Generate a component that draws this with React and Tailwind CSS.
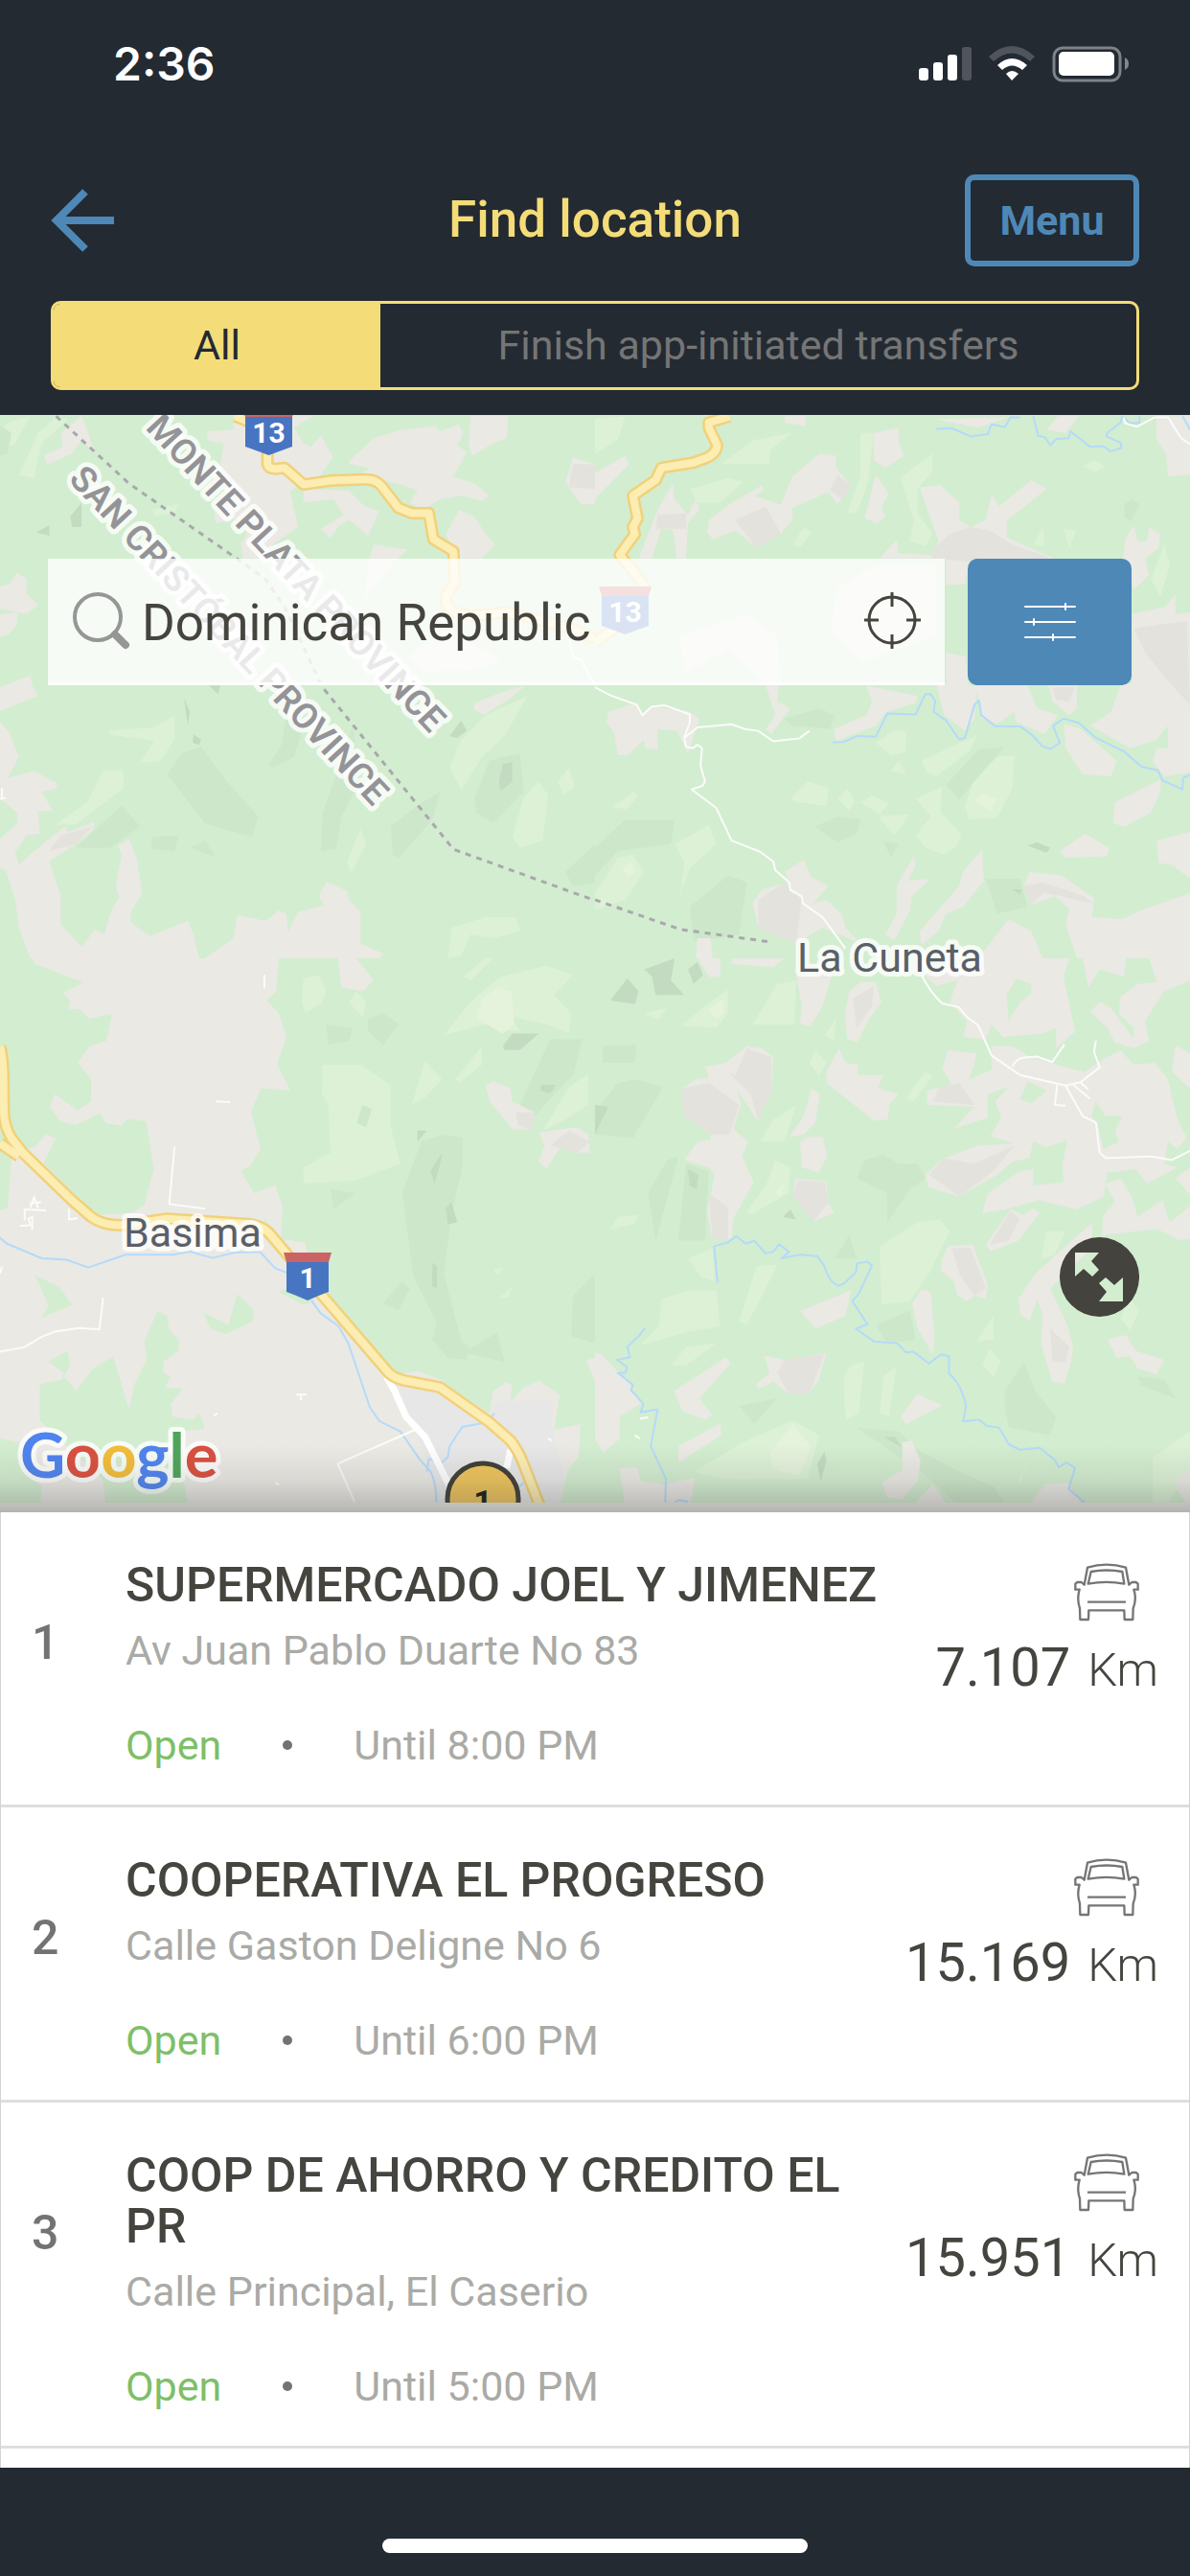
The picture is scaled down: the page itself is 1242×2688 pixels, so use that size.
import { useState } from "react"

const locations = [
  { id: 1, name: "SUPERMERCADO JOEL Y JIMENEZ", address: "Av Juan Pablo Duarte No 83", until: "Until 8:00 PM", distance: "7.107" },
  { id: 2, name: "COOPERATIVA EL PROGRESO", address: "Calle Gaston Deligne No 6", until: "Until 6:00 PM", distance: "15.169" },
  { id: 3, name: "COOP DE AHORRO Y CREDITO EL PR", address: "Calle Principal, El Caserio", until: "Until 5:00 PM", distance: "15.951" },
]

// Map terrain, one entry per tile. Every tile has its own 1568 x 1568 grid.
const tiles = [
  {
    id: "nw", x: 0, y: -3, height: 570,
    land: [
      "545,80 548,55 615,50 615,12 825,12 775,45 800,90 820,100 845,65 878,130 845,180 765,225 785,330 720,380 700,420 640,420 635,380 650,350 640,300 570,320 565,290 600,230 580,150 590,90",
      "920,140 985,75 1060,50 1145,40 1160,55 1210,35 1220,65 1205,95 1230,115 1195,185 1250,205 1290,240 1270,255 1215,240 1160,250 1115,280 1080,260 1100,225 1060,210 990,190 940,185 975,160 920,150",
      "800,220 920,225 960,270 1000,285 985,320 970,355 920,310 895,325 870,362 845,335 905,295 880,250 800,260",
      "1240,12 1340,12 1335,75 1300,90 1245,125 1235,95",
      "1510,130 1568,150 1568,265 1530,265 1490,200",
      "1175,350 1210,280 1250,300 1280,350 1305,380 1270,420 1200,420",
      "985,380 1075,395 1030,440 960,540 970,430",
      "0,500 25,495 45,460 70,480 70,520 100,555 70,580 0,565",
      "0,580 45,575 45,610 20,640 0,645",
      "0,790 80,755 85,785 100,815 0,858",
      "0,890 25,920 50,990 20,1050 90,1030 150,1065 150,1080 110,1090 140,1145 100,1145 105,1210 70,1215 40,1265 50,1300 90,1260 170,1190 180,1205 250,1175 245,1200 200,1240 130,1290 160,1390 160,1470 215,1535 250,1485 275,1500 290,1440 315,1390 305,1365 320,1270 310,1245 340,1225 360,1280 375,1380 345,1435 345,1465 395,1505 495,1460 510,1500 525,1568 80,1568 50,1480 40,1400 15,1315 0,1310 0,1225 45,1180 45,1150 0,1110",
      "540,1568 615,1510 625,1445 700,1460 735,1430 755,1440 760,1490 785,1435 855,1415 840,1390 860,1348 915,1375 920,1400 950,1435 950,1525 1010,1555 1000,1568",
      "1250,835 1320,805 1385,785 1340,825 1275,870 1250,855",
      "115,125 165,100 160,60 215,12 230,50 250,120 215,80 190,120 125,150",
      "1080,700 1180,620 1320,710 1250,740 1120,745",
    ],
    shade: ["1510,150 1568,150 1568,220 1500,215", "130,1260 160,1215 245,1190 200,1240"],
    light: [
      "50,180 100,60 150,12 180,20 110,90 90,190",
      "285,915 405,905 460,870 460,940 420,1005 370,1005 405,945 290,925",
      "270,1030 325,1030 325,1080 200,1185 145,1185 230,1120",
      "1185,1020 1215,940 1280,870 1390,815 1330,930 1270,990 1215,1085",
      "1380,1105 1420,1060 1445,1100 1430,1230 1370,1250 1350,1220",
      "1190,1480 1280,1450 1360,1450 1370,1490 1300,1510 1240,1500 1215,1560 1180,1568",
      "915,1290 950,1195 965,1240 925,1325",
      "1470,1060 1500,1020 1515,1075 1485,1100",
      "400,280 470,265 460,290 410,300",
      "20,30 80,12 40,90 0,110 0,60",
    ],
    pale: [],
    dark: [
      "440,1040 480,980 530,960 590,1050 680,1160 665,1220 600,1200 540,1180",
      "850,1150 900,1000 930,900 950,1060 900,1160 885,1255 845,1260",
      "1030,1190 1100,1130 1160,1090 1140,1170 1050,1280 1035,1270",
      "1250,1110 1290,1000 1370,980 1380,1090 1300,1180 1255,1150",
      "710,1010 740,960 755,870 800,900 775,990 720,1020",
      "0,40 30,60 20,120 0,125",
      "200,1250 320,1130 370,1190 290,1250",
      "1490,1320 1568,1240 1568,1350 1510,1360",
      "400,1220 470,1215 460,1260 400,1255",
      "500,1250 540,1230 570,1278",
    ],
    deep: [
      "185,300 215,260 215,330 190,330", "95,345 130,325 130,355", "485,820 500,860 495,900", "510,925 530,940 525,955 508,950",
      "1315,1060 1325,1010 1350,1005 1350,1060 1320,1088", "550,785 580,785 575,810", "1185,930 1215,885 1230,915 1205,935",
    ],
    rivers: "",
    roads: "M1500 650L1510 705 1530 710 1568 785M0 1110L15 1108M5 1080V1108",
    avenues: "",
    highways: "M620 12L650 25 705 60 705 150Q708 163 725 163L750 160 800 208 870 197 960 193Q990 192 1005 212L1050 275 1085 290 1130 290 1142 365 1195 400 1198 490 1175 530Q1172 560 1200 575L1240 585 1330 575 1400 590 1500 620 1568 650",
    border: "M148 12L340 205 630 425 700 480 750 560 850 790 1195 1255 1568 1402",
  },
  {
    id: "ne", x: 621, y: -3, height: 570,
    land: [
      "0,175 80,125 90,150 0,250",
      "115,420 165,280 205,205 210,250 245,295 265,250 275,280 245,320 240,420 215,420 205,340 175,335 150,420",
      "300,310 360,260 440,210 445,225 420,240 490,265 520,185 590,120 635,125 635,160 675,210 640,265 615,230 520,275 520,310 490,350 425,390 370,340 310,365 295,345",
      "735,60 800,45 800,90 815,125 765,160 735,140",
      "740,180 775,235 755,270 765,300 745,320 710,305",
      "855,215 910,210 960,260 960,310 990,330 1030,310 1045,235 1065,270 1150,195 1190,220 1140,265 1085,310 1085,360 1210,420 1260,430 985,440 975,495 925,495 925,420 750,420 795,365 800,405 890,410 905,370",
      "895,20 1090,15 1010,45",
      "1190,50 1220,12 1275,12 1240,60",
      "1480,12 1568,12 1568,180 1510,185 1505,120 1480,80",
      "500,12 555,12 555,40 500,30",
      "1390,420 1400,360 1420,325 1430,370 1455,370 1460,330 1490,350 1485,390 1450,420 1460,470 1420,510",
      "1415,580 1500,560 1530,525 1530,580 1568,575 1568,1035 1500,1045 1470,1005 1480,965 1510,965 1510,900 1480,940 1410,965 1305,900 1360,860 1385,780 1415,780",
      "925,690 975,700 985,785 1140,785 1165,850 1220,870 1185,925 1110,890 1105,860 1060,895 1020,880 1005,800 1000,880 975,915 920,870 900,785 925,780",
      "1195,785 1270,785 1270,850 1250,870 1205,830",
      "715,785 850,815 845,835 770,860 740,900 635,945 630,910 715,870 730,830",
      "450,785 485,785 480,830 515,850 465,925 450,910 475,870",
      "35,860 110,835 125,870 150,845 250,860 275,880 245,980 215,915 165,910 165,970 130,965 130,940 85,985 60,985 50,920 30,890",
      "1235,895 1280,910 1375,1000 1360,1045 1285,1040 1240,965",
      "1370,1120 1490,1055 1490,1090 1465,1150 1395,1190 1365,1180",
      "1225,1260 1290,1210 1355,1250 1350,1275 1240,1280",
      "1480,1230 1568,1205 1568,1340 1520,1300 1485,1295",
      "840,1275 845,1300 825,1345 885,1340 835,1390 830,1430 790,1515 765,1500 795,1440 795,1360",
      "1020,1255 1025,1345 970,1420 925,1440 905,1490 860,1530 855,1490 960,1360 970,1320",
      "1130,1360 1145,1320 1230,1330 1315,1395 1310,1450 1390,1455 1440,1430 1568,1380 1568,1568 1270,1568 1240,1470 1250,1425 1210,1390 1150,1415",
      "500,1320 550,1285 570,1335 615,1360 575,1410 610,1400 650,1440 660,1480 700,1525 600,1480 530,1525 430,1480 415,1410 440,1370 510,1350",
      "1010,1568 1090,1455 1150,1490 1180,1568",
      "265,1568 270,1510 305,1510 310,1568",
      "220,640 400,580 480,640 490,785 455,785 350,680 240,750",
      "640,500 740,440 900,440 900,640 700,720 620,620",
    ],
    shade: [
      "885,400 935,350 990,330 1040,340 1100,380 1200,418 1100,440 890,420",
      "370,310 450,270 490,350 425,390",
      "430,1400 500,1350 545,1400 530,1525 430,1480",
      "1560,600 1568,840 1500,760 1450,690 1420,620",
      "1205,790 1265,790 1250,830 1215,825",
      "165,295 240,290 240,335 160,335",
      "640,180 675,210 650,250 620,225",
      "1130,1360 1180,1350 1290,1390 1310,1410 1230,1390 1180,1380 1150,1415",
    ],
    light: [
      "700,60 735,60 720,200 690,290 665,290 700,180",
      "805,190 850,150 890,120 890,170 850,220 850,290 890,350 870,385 830,370 840,310",
      "330,150 420,80 520,60 460,110 460,150",
      "975,1130 1000,1050 1060,990 1105,985 1100,1080 1060,1165 985,1170",
      "740,950 785,915 820,915 820,975 780,985",
      "860,1000 960,950 1005,930 990,970 900,1045 875,1035",
      "515,1110 560,1060 615,1080 610,1130 530,1120",
      "640,1110 665,1080 685,1115 670,1145",
      "700,1120 730,1100 775,1125 750,1155",
      "780,1030 800,1000 820,1040",
      "845,1110 915,1075 910,1150 965,1210 955,1245 920,1270 870,1250 845,1215 885,1160",
      "745,1160 830,1155 790,1215",
      "210,1240 300,1185 320,1240 250,1310 225,1390 235,1290",
      "0,1380 60,1280 100,1270 130,1320 80,1400 0,1430",
      "250,220 350,190 390,200 330,260 270,260",
      "1465,480 1500,380 1515,440 1490,530",
      "0,20 80,12 60,80 0,120",
      "1235,335 1268,340 1250,390",
      "1180,330 1185,385 1155,380",
      "1285,155 1315,138 1345,155 1320,172",
      "45,1135 100,1090 115,1100 85,1140",
      "520,380 550,330 572,345 540,388",
    ],
    pale: ["1000,1120 1020,1095 1060,1110 1045,1145", "70,1310 95,1290 110,1320 90,1335"],
    dark: [
      "925,1070 1010,970 1080,960 1000,1060 960,1115",
      "580,1190 640,1160 700,1170 690,1210 640,1235",
      "500,880 590,850 630,870 620,910 520,900",
      "0,1250 80,1170 210,1170 200,1240 60,1260 0,1330",
      "1030,1340 1120,1340 1140,1420 1060,1440",
      "250,1420 350,1330 400,1350 380,1500 260,1520",
      "760,1230 800,1240 780,1280",
      "1460,680 1525,700 1500,745",
      "1395,265 1415,250 1435,265 1415,310 1395,305",
    ],
    deep: ["1140,1245 1165,1235 1200,1250 1190,1265", "1100,1370 1125,1370 1120,1385"],
    rivers: "M900 48L940 46 990 70 1035 63 1045 35 1080 43 1095 15 1120 15M1155 12L1168 68 1185 72 1200 95 1215 78 1248 75 1253 55 1305 100 1340 98 1358 113 1387 103 1385 88 1348 70 1350 60 1385 30 1390 12 1410 32 1435 30 1435 12M1548 12L1568 50M625 948L655 947 690 930 740 932 770 865 845 868 870 810 885 810 897 830 892 860 925 885 960 940 975 935 1000 840 1012 828 1018 870 1055 902 1120 902 1150 925 1180 960 1200 967 1225 950 1207 900 1235 880 1275 892 1320 935 1395 975 1440 1018 1483 1028 1495 1057 1548 1083 1550 1050 1568 1042",
    roads: "M0 790L45 815 110 840 125 870 150 845 185 842 250 868 250 890 235 935 240 960 258 965 270 955 282 965 278 1015 290 1060 283 1073 255 1083 320 1137 360 1230 435 1262 470 1290 475 1315 512 1350 515 1372 545 1390 548 1410 600 1450 660 1540M235 935L270 905 360 896 395 910 430 915 470 945 538 937 565 915M1393 15L1397 32 1428 42 1475 15 1510 15 1545 75 1568 92",
    avenues: "",
    highways: "M355 12L300 30 300 45 322 95Q320 120 290 133L260 145 175 160 160 195 100 240 112 305 100 330 105 350 65 410 100 455 130 500 80 600 0 660",
    border: "M0 1400L225 1485 455 1520",
  },
  {
    id: "sw", x: 0, y: 567, height: 600,
    land: [
      "0,0 735,0 728,90 703,115 735,150 755,215 730,290 765,360 687,355 662,420 687,520 660,565 635,580 670,640 725,618 745,680 740,765 805,775 810,810 860,900 1020,1140 1100,1125 1165,1150 1200,1180 1290,1240 1300,1180 1335,1155 1350,1165 1345,1210 1380,1170 1420,1152 1475,1190 1460,1285 1530,1270 1525,1360 1500,1390 1490,1420 1460,1568 0,1568",
      "890,0 940,0 985,60 955,90 900,80",
      "1280,345 1300,335 1345,355 1350,390 1410,420 1400,470 1350,465 1290,390",
      "1420,475 1520,460 1550,480 1555,530 1520,530 1480,510 1440,575 1420,555 1435,510",
      "1545,1095 1568,1090 1568,1155",
    ],
    wood: [
      "0,0 85,0 90,15 180,50 220,65 165,95 185,115 180,138 210,140 235,165 295,150 280,225 235,240 205,285 240,330 240,390 205,415 145,370 130,405 160,445 200,455 262,423 280,450 320,457 335,438 385,445 405,575 380,675 340,695 250,700 115,558 148,490 120,480 90,515 65,520 30,545 20,680 0,688",
      "92,865 155,895 190,945 110,980 128,945",
      "535,965 602,1000 625,915 670,960 665,990 592,1025 555,1010",
      "105,1162 165,1148 168,1130 128,1100 178,1070 185,1110 168,1140 200,1180 245,1120 298,1085 340,1230 355,1160 387,1095 380,1045 415,962 440,975 445,1010 472,1045 470,1070 430,1100 430,1130 450,1140 435,1170 480,1175 450,1215 455,1250 510,1258 525,1240 540,1283 470,1290 450,1340 480,1400 510,1568 290,1568 270,1420 105,1260",
      "0,1310 50,1320 60,1400 110,1440 100,1568 0,1568",
      "695,705 720,745 700,740",
      "735,910 755,900 830,935 800,945",
    ],
    urban: [
      "1050,1165 1160,1190 1300,1280 1350,1330 1380,1400 1415,1568 1180,1568 1100,1300",
      "1300,1210 1455,1205 1455,1290 1490,1420 1440,1568 1350,1310 1290,1250",
    ],
    shade: ["1360,420 1410,420 1400,470 1365,455", "1450,510 1500,470 1555,500 1520,530"],
    light: [
      "795,120 800,55 840,45 860,85 850,120 805,150",
      "920,120 940,90 965,120 955,160",
      "850,290 950,290 1030,345 1030,460 1055,560 940,605 800,615 800,570 870,530 865,400 848,370",
      "1170,210 1230,130 1260,100 1320,50 1440,20 1510,45 1460,100 1505,150 1500,205 1440,180 1350,160 1370,200 1330,195 1280,180",
      "1085,400 1120,280 1165,330 1120,380",
      "1430,470 1500,350 1550,315 1550,400 1490,440",
      "1220,50 1280,0 1300,0 1240,60",
      "1200,330 1270,240 1270,290 1210,340",
      "120,140 145,120 135,145", "145,268 165,265 150,292", "1300,850 1330,840 1310,865", "1315,925 1350,895 1340,925",
    ],
    pale: ["1255,165 1270,110 1310,80 1350,90 1355,180 1325,205"],
    dark: [
      "1060,640 1110,500 1170,480 1220,490 1220,560 1190,700 1170,860 1215,1040 1235,1060 1230,1095 1180,1090 1140,1040 1150,990 1090,870",
      "860,180 930,190 920,225 865,235",
      "970,165 1010,148 1050,180 1010,235 970,200",
      "1370,400 1450,220 1535,220 1510,320 1460,370 1410,430 1340,400",
      "1220,1075 1280,1040 1310,1020 1330,1100",
      "1510,920 1568,860 1568,1050 1505,1030",
      "1010,940 1060,880 1080,900 1050,960",
      "870,630 935,640 880,685",
      "940,450 955,400 980,410 965,460",
      "170,150 185,145 200,200 180,200", "185,320 205,290 210,340 190,350",
    ],
    deep: [
      "1325,240 1350,205 1420,205 1370,250 1330,250", "1425,345 1465,345 1450,368 1425,362", "1100,470 1125,470 1100,500",
      "1175,680 1190,665 1205,720 1180,725", "1140,830 1152,840 1152,900 1138,895", "1135,580 1165,530 1160,560 1145,615",
    ],
    rivers: "M0 762L18 778 110 818 175 822 233 843 330 808 455 808 500 800 560 817 620 802 685 800 725 845 755 857M820 932L845 968 892 1003 918 1050 975 1225 1000 1262 1055 1290 1105 1365 1135 1400Q1150 1430 1150 1484M1125 1400L1130 1365 1165 1375 1180 1360 1185 1330 1218 1278 1285 1265 1303 1240M1365 1445L1380 1430",
    roads: "M460 513L446 670 540 683M0 1073L65 1060 110 1032 145 1018 210 1008 262 1012 272 925M697 45V82M568 390L607 392M1095 1285L890 1378 935 1484M65 715V685L122 687M52 730L80 728 75 710 85 705V740M80 680L90 650 100 680M78 668L108 665M780 1190H808M793 1190V1205M182 683V712L205 708M563 1248L573 1240M725 1430L735 1436M0 860L5 840M1445 1308L1453 1316",
    avenues: "M1018 1140L1040 1180 1070 1250 1120 1305 1190 1450M1345 1340L1335 1390",
    highways: "M0 505L50 540M0 240Q8 270 9 320L10 420Q12 460 30 490L60 530 190 660 240 705Q270 728 320 728L440 710 650 724Q690 728 710 750L800 860 1020 1125Q1030 1140 1060 1150L1160 1170 1290 1265 1345 1315Q1365 1340 1380 1380L1425 1500",
    border: "",
  },
  {
    id: "se", x: 621, y: 567, height: 600,
    land: [
      "530,45 625,45 600,130 568,185 540,178 545,130",
      "700,65 740,65 755,120 720,170 692,228 665,220 658,160 670,90",
      "290,295 345,285 400,240 440,245 470,270 465,360 430,445 375,360 385,400 365,465 403,500 388,540 418,610 365,710 360,765 310,768 295,690 315,590 300,570 235,550 270,500 305,495 305,450 235,430 228,355 265,330 300,325",
      "643,245 660,285 695,290 690,318 760,318 745,355 800,370 775,400 772,440 735,443 610,340 610,310",
      "570,355 593,370 580,450 550,480 512,488 550,430",
      "540,500 560,488 600,487 612,540 590,585 545,570",
      "530,600 610,608 615,665 630,695 575,718 550,680 520,645",
      "1250,0 1235,50 1265,200 1215,245 1215,190 1180,205 1075,215 1045,180 1030,220 970,215 980,170 935,120 955,60 900,75 865,45 1000,0",
      "1285,0 1400,0 1395,50 1330,30 1300,80",
      "1460,0 1568,0 1568,60 1500,90 1450,170 1460,225 1420,245 1370,230 1350,190 1305,145 1330,118 1360,135 1420,220 1420,190 1380,150 1385,105 1430,70 1480,65",
      "1045,240 1100,240 1150,270 1250,300 1290,310 1330,280 1385,250 1420,290 1475,285 1510,330 1535,440 1560,490 1535,520 1510,500 1500,560 1535,570 1455,615 1425,575 1350,585 1340,650 1270,685 1170,660 1080,685 1020,695 1035,640 1120,580 1155,575 1155,620 1235,610 1232,560 1245,495 1190,515 1155,500 1145,545 1100,555 1060,590 960,650 880,625 870,590 920,545 1010,510 1105,505 1042,485 1070,435 1055,390 1090,350 1035,370 1035,435 945,465 1000,405 875,400 875,360 940,345 915,300 930,250 1005,260 1000,290 985,330 1045,305",
      "1340,700 1370,665 1345,615 1385,600 1415,650 1430,705 1495,660 1515,720 1568,675 1568,765 1540,768 1480,738 1335,755",
      "1530,235 1568,260 1568,355 1520,310",
      "1530,600 1568,570 1568,645",
      "1030,780 1095,685 1130,700 1155,680 1172,695 1115,770 1042,800",
      "915,820 930,785 995,780 1035,890 1030,930 1000,920 980,935 955,920 945,880 910,850",
      "835,940 860,903 885,910 895,1030 890,1080 850,1010",
      "1115,930 1160,860 1310,720 1310,790 1200,900 1245,1000 1260,1060 1255,1100 1237,1160 1205,1155 1175,1050 1180,970 1165,930 1145,990 1120,970",
      "1350,1040 1400,1027 1425,1070 1500,1095 1480,1133 1430,1120 1410,1085 1375,1090",
      "540,962 675,905 660,975 582,1010",
      "445,1083 500,1095 610,1077 590,1150 565,1185 510,1187 470,1155 430,1175 425,1160 460,1130",
      "208,1180 345,1088 357,1105 275,1200 310,1245 290,1258 230,1235",
      "220,1330 330,1268 333,1300 220,1375",
      "0,1075 15,1078 90,1160 120,1215 65,1250 65,1310 22,1350 0,1310",
      "805,1250 850,1187 915,1220 820,1270",
      "810,1320 835,1315 858,1370 850,1425 810,1475 770,1470 755,1430 810,1395",
      "65,1390 110,1388 120,1425 180,1435 263,1417 250,1500 80,1500",
      "1150,1484 1185,1435 1245,1430 1290,1500",
      "845,1484 890,1435 935,1500",
      "1530,1420 1568,1390 1568,1500 1535,1450",
      "360,0 500,0 470,25 360,15",
      "270,0 330,0 330,50 300,50",
    ],
    wood: [
      "1085,100 1110,55 1150,70 1150,95 1120,120 1090,170",
      "1120,385 1140,335 1190,360 1150,395",
      "1320,390 1345,430 1390,430 1370,470 1380,500 1340,520 1325,450 1308,430",
    ],
    shade: [
      "370,320 400,245 465,270 465,360 430,445 410,370 350,310",
      "910,350 960,340 1000,400 890,390",
      "880,590 920,545 1000,560 1105,510 1050,580 960,650",
      "680,110 735,75 730,130 690,190",
      "228,355 300,340 380,400 355,480 305,480 235,430",
      "535,605 605,610 615,665 575,718 520,645",
      "500,1095 605,1080 565,1185 510,1187 480,1130",
      "300,640 350,680 350,765 310,768",
      "1200,1010 1250,1060 1240,1100 1205,1100",
      "940,790 990,790 1030,900 1000,920 960,860",
      "1040,780 1095,690 1120,710 1090,770",
    ],
    light: [
      "415,180 480,70 530,60 525,180",
      "225,185 290,130 350,85 350,150 320,190",
      "750,785 850,720 910,712 935,745 880,860 830,935 755,945",
      "175,930 245,905 320,905 330,1005 240,1020 120,1055 170,1000",
      "380,990 425,840 480,835 450,900 400,1000",
      "655,1140 675,1110 710,1100 695,1240 660,1258",
      "750,1240 760,1140 795,1110 775,1250",
      "260,1400 390,1320 520,1260 590,1300 560,1420 340,1420",
      "400,690 450,620 475,550 515,570 510,640 410,700",
      "435,500 470,440 530,400 500,500",
      "245,820 310,790 315,880 280,870",
      "1020,1110 1040,1065 1070,1100 1050,1140",
      "1005,1045 1050,975 1050,1040",
      "1470,1360 1568,1290 1568,1400 1500,1500 1470,1500",
      "200,1110 240,1060 320,1050 240,1110",
      "565,285 580,248 610,285 590,320", "605,210 635,165 630,225", "130,150 190,135 165,168", "820,380 870,310 890,320 840,390",
      "1175,820 1190,745 1240,745 1210,810", "1385,980 1410,930 1435,960 1410,1015", "40,740 60,705 115,700 100,725", "1115,1430 1140,1370 1120,1430",
    ],
    pale: ["460,1350 520,1270 570,1330 540,1410 470,1395", "300,140 340,110 340,150 320,165", "470,640 500,615 490,650"],
    dark: [
      "690,600 710,550 760,535 800,560 850,560 870,600 830,630 770,720 770,640",
      "220,770 240,560 300,580 290,770",
      "1080,1180 1130,1100 1160,1180 1215,1250 1200,1300 1090,1280 1080,1220",
      "0,420 60,340 110,330 180,350 100,490 0,480",
      "740,1000 830,960 845,1040 770,1050",
      "690,1280 800,1290 850,1340 960,1400 1050,1440 1080,1484 950,1484 860,1400",
      "1430,1140 1500,1150 1530,1200 1440,1165",
      "380,1220 480,1200 420,1270",
      "630,820 670,755 690,820",
      "20,240 110,235 105,285 20,285",
      "140,640 190,550 220,540 160,770",
    ],
    deep: [
      "40,115 85,55 115,90 105,125", "130,30 210,0 200,60 235,100 160,100 150,50", "0,400 35,405 0,480", "245,575 272,590 268,630 250,620",
      "495,705 515,685 530,712", "760,1305 790,1305 810,1335", "585,1380 605,1345 610,1370 595,1425", "245,30 270,10 285,45 260,70",
    ],
    rivers: "M323 885L314 785 350 775 372 757 397 778 420 770 450 805 470 800 485 780 512 800 492 818 540 808 585 812 605 840Q615 880 640 893L655 888 688 855 690 832 718 827 730 838 695 915 678 935 718 998 688 1010 735 1045 797 1050 820 1075 840 1073 880 1105 912 1080 933 1085 933 1133Q965 1160 978 1220L970 1263 1012 1258 1032 1275 1065 1280 1090 1325 1120 1340 1172 1335 1212 1368 1222 1388 1243 1375 1265 1390 1248 1447 1290 1484M132 1007L118 1027 85 1060 92 1088 58 1095 85 1115 80 1130 60 1130 100 1163 95 1178 128 1215 120 1238 165 1230 147 1330 187 1420 185 1484M210 1484L222 1477 245 1482",
    roads: "M860 45Q885 95 915 123L958 133 980 160 1010 183 1045 265 1120 318 1240 347 1280 338 1330 297 1315 255 1320 225M1100 295Q1110 272 1135 270L1165 268 1205 283 1237 235M1240 347L1285 430 1320 448 1330 530 1347 545 1465 540 1520 550 1568 525M1260 345L1305 383M1280 340L1300 357M1218 345L1212 400 1240 402M105 1300L118 1310M118 1255L140 1252",
    avenues: "",
    highways: "",
    border: "",
  },
]

const Shapes = ({ points = [], fill }) => points.map((p) => <polygon key={p} points={p} fill={fill} />)

const Line = (props) => <path fill="none" strokeLinejoin="round" vectorEffect="non-scaling-stroke" {...props} />

const MapTile = ({ tile }) => (
  <svg x={tile.x} y={tile.y} width="621" height={tile.height} viewBox="0 0 1568 1568" preserveAspectRatio="none">
    <rect width="1568" height="1568" fill="#d3edd0" />
    <Shapes points={tile.light} fill="#dcf1d6" />
    <Shapes points={tile.dark} fill="#cde7ca" />
    <Shapes points={tile.pale} fill="#e5f2dc" />
    <Shapes points={tile.deep} fill="#c3dcc1" />
    <Shapes points={tile.land} fill="#eae9e4" />
    <Shapes points={tile.wood} fill="#d3edd0" />
    <Shapes points={tile.urban} fill="#e7e7e7" />
    <Shapes points={tile.shade} fill="#e3e2dd" />
    <Line d={tile.rivers} stroke="#b5dafa" strokeWidth="2" />
    <Line d={tile.roads} stroke="#fbfcfa" strokeWidth="2" />
    <Line d={tile.avenues} stroke="#ffffff" strokeWidth="7" />
    <Line d={tile.border} stroke="#a9a8ac" strokeWidth="3" strokeDasharray="6 6" />
    <Line d={tile.highways} stroke="#f1d17a" strokeWidth="13" />
    <Line d={tile.highways} stroke="#fcedb2" strokeWidth="8" />
  </svg>
)

const Shield = ({ x, y, label, width = 50 }) => (
  <g transform={`translate(${x} ${y})`}>
    <path d={`M3 8H${width - 3}V41Q${width - 14} 45 ${width / 2} 50Q14 45 3 41Z`} fill="#4875c1" />
    <path d={`M0 0H${width}L${width - 3} 10H3Z`} fill="#cb6364" />
    <text x={width / 2} y="37" textAnchor="middle" fill="#fff" fontSize="30" fontWeight="700">{label}</text>
  </g>
)

const MapCanvas = () => (
  <svg className="block h-full w-full" viewBox="0 0 1242 1135" preserveAspectRatio="xMidYMid slice" role="img" aria-label="Map of locations">
    <defs>
      <linearGradient id="fade" x1="0" y1="0" x2="0" y2="1">
        <stop offset="0" stopColor="#444" stopOpacity="0" />
        <stop offset="0.6" stopColor="#444" stopOpacity="0.1" />
        <stop offset="1" stopColor="#444" stopOpacity="0.25" />
      </linearGradient>
    </defs>
    {tiles.map((tile) => <MapTile key={tile.id} tile={tile} />)}

    <Shield x={253} y={-8} label="13" width={55} />
    <Shield x={625} y={179} label="13" width={55} />
    <Shield x={296} y={874} label="1" />

    {/* Place labels */}
    <g stroke="#fff" strokeOpacity="0.8" strokeWidth="10" strokeLinejoin="round" paintOrder="stroke">
      <g fill="#949397" fontSize="37" fontWeight="600" textAnchor="middle">
        <text transform="translate(240 229) rotate(47)" y="14">SAN CRISTÓBAL PROVINCE</text>
        <text transform="translate(310 164) rotate(47)" y="14">MONTE PLATA PROVINCE</text>
      </g>
      <g fill="#5b5f68" fontSize="43">
        <text x="832" y="581">La Cuneta</text>
        <text x="129" y="868">Basima</text>
      </g>
      <text x="21" y="1109" fontFamily="Lato" fontSize="65" fontWeight="700">
        <tspan fill="#4f84ee">G</tspan>
        <tspan fill="#d9503f">o</tspan>
        <tspan fill="#f3bd3b">o</tspan>
        <tspan fill="#4f84ee">g</tspan>
        <tspan fill="#4fa45b">l</tspan>
        <tspan fill="#d9503f">e</tspan>
      </text>
    </g>

    {/* Marker of the nearest location */}
    <circle cx="504" cy="1131" r="37" fill="#eec45c" stroke="#3f3e37" strokeWidth="5" />
    <text x="504" y="1146" textAnchor="middle" fontSize="34" fontWeight="700" fill="#1c1b17">1</text>
    <rect y="1075" width="1242" height="60" fill="url(#fade)" />
  </svg>
)

const StatusIcons = () => (
  <svg width="220" height="38" viewBox="0 0 220 38" aria-hidden="true">
    <g fill="#fff">
      <rect x="1" y="23" width="10" height="13" rx="3" />
      <rect x="16" y="17" width="10" height="19" rx="3" />
      <rect x="31" y="9" width="10" height="27" rx="3" />
      <rect x="46" y="1" width="10" height="35" rx="3" fill="#50555d" />
      <path d="M74 11Q98 -11 122 11L117 16Q98 -1 79 16Z" fill="#50555d" />
      <path d="M83 20Q98 6 114 20L109 25Q98 16 88 25Z" />
      <path d="M92 29Q98 23 105 29L98 36Z" />
      <rect x="147" y="6" width="58" height="25" rx="5" />
      <path d="M216 12Q220 14 220 18.500Q220 23 216 25Z" fill="#85888d" />
    </g>
    <rect x="142" y="2" width="69" height="34" rx="9" fill="none" stroke="#7f8287" strokeWidth="3" />
  </svg>
)

const CarIcon = () => (
  <svg className="mr-5" width="68" height="61" viewBox="0 0 204 183" fill="none" stroke="#757575" strokeWidth="7" strokeLinejoin="round" aria-hidden="true">
    <path d="M32 68L42 14Q102 -4 162 14L172 68L181 60H194L200 65V83H187Q197 112 185 142L184 177H158L157 148H46L45 177H19L18 142Q8 112 17 83H4V65L10 60H23Z" />
    <path d="M53 27Q102 18 151 27L157 65Q102 54 44 65Z" />
    <path d="M42 122H162" />
  </svg>
)

const LocationRow = ({ id, name, address, until, distance }) => (
  <li className="flex border-b-[3px] border-[#dedede] pb-[37px] pr-8">
    <div className="w-[130px] shrink-0 pl-8 pt-[106px] text-[50px] font-medium leading-[60px] text-[#737373]">{id}</div>
    <div className="min-w-0 flex-1 pt-[50px]">
      <h2 className="max-w-[800px] text-[50px] font-medium leading-[53px] text-[#45443e]">{name}</h2>
      <p className="mt-4 text-[43px] leading-[50px] text-[#aaaaa6]">{address}</p>
      <p className="mt-[49px] flex items-center text-[43px] leading-[50px] text-[#aaaaa6]">
        <span className="text-[#7ebf68]">Open</span>
        <span className="mx-[64px] size-[10px] rounded-full bg-[#737373]"></span>
        <span>{until}</span>
      </p>
    </div>
    <div className="flex shrink-0 flex-col items-end pt-[53px] text-[#45443e]">
      <CarIcon />
      <p className="mt-4 flex items-baseline gap-[18px] leading-[64px]">
        <span className="text-[56px]">{distance}</span>
        <span className="text-[49px] font-light">Km</span>
      </p>
    </div>
  </li>
)

export default function App() {
  const [query, setQuery] = useState("Dominican Republic")
  const [tab, setTab] = useState("all")

  const tabClass = (name) => (tab === name ? "bg-[#f4dd78] text-[#232a32]" : "text-[#757575]")

  return (
    <div className="flex min-h-screen flex-col bg-[#232a32] font-['Roboto',sans-serif]">
      {/* Status bar */}
      <div className="flex h-[134px] items-center justify-between pl-[118px] pr-[64px]">
        <span className="font-['Inter',sans-serif] text-[48px] font-semibold text-white">2:36</span>
        <StatusIcons />
      </div>

      <header className="px-[53px] pb-[26px] pt-12">
        <div className="grid grid-cols-[1fr_auto_1fr] items-center">
          <button type="button" aria-label="Back" className="justify-self-start">
            <svg width="66" height="66" viewBox="0 0 66 66" fill="none" stroke="#4e88b7" strokeWidth="8">
              <path d="M36 3L6 33L36 63M6 33H66" />
            </svg>
          </button>
          <h1 className="text-[53px] font-medium text-[#f4dd78]">Find location</h1>
          <button type="button" className="h-24 w-[182px] justify-self-end rounded-[10px] border-[6px] border-[#4e88b7] text-[43px] font-bold text-[#4e88b7]">
            Menu
          </button>
        </div>
        <div role="tablist" className="mt-9 flex h-[93px] overflow-hidden rounded-[10px] border-[3px] border-[#f4dd78] text-[43px]">
          <button type="button" role="tab" aria-selected={tab === "all"} onClick={() => setTab("all")} className={`w-[341px] ${tabClass("all")}`}>
            All
          </button>
          <button type="button" role="tab" aria-selected={tab === "finish"} onClick={() => setTab("finish")} className={`flex-1 ${tabClass("finish")}`}>
            Finish app-initiated transfers
          </button>
        </div>
      </header>

      {/* Map with its controls on top */}
      <section className="relative h-[1135px] overflow-hidden">
        <MapCanvas />
        <div className="absolute left-[50px] right-[61px] top-[150px] flex h-[132px] gap-6">
          <div className="flex min-w-0 flex-1 items-center border-b-[3px] border-white bg-white/80 pl-[26px] pr-[25px]">
            <svg width="60" height="60" viewBox="0 0 60 60" fill="none" stroke="#969696" aria-hidden="true">
              <circle cx="26" cy="26" r="24" strokeWidth="4" />
              <path d="M44 44L55 55" strokeWidth="8" strokeLinecap="round" />
            </svg>
            <label htmlFor="search" className="sr-only">Search location</label>
            <input
              id="search"
              type="text"
              value={query}
              onChange={(e) => setQuery(e.target.value)}
              className="ml-3 h-20 min-w-0 flex-1 bg-transparent pt-1 text-[53px] text-[#45443e] outline-none"
            />
            <button type="button" aria-label="Use my location">
              <svg width="59" height="59" viewBox="0 0 59 59" fill="none" stroke="#45443e" strokeWidth="3">
                <circle cx="29" cy="29" r="24" />
                <path d="M29 0V15M29 44V59M0 29H15M44 29H59" />
              </svg>
            </button>
          </div>
          <button type="button" aria-label="Filters" className="flex w-[171px] items-center justify-center rounded-[10px] bg-[#4e88b7]">
            <svg width="54" height="42" viewBox="0 0 54 42" stroke="#fff" strokeWidth="2" strokeLinecap="round">
              <path d="M1 5H53M43 2V8M1 21H53M10 18V24M1 37H53M30 34V40" />
            </svg>
          </button>
        </div>
        <button type="button" aria-label="Expand map" className="absolute bottom-[194px] right-[53px]">
          <svg width="83" height="83" viewBox="0 0 83 83">
            <path
              fillRule="evenodd"
              fill="#45433d"
              d="M41.500 0A41.500 41.500 0 1 1 41.500 83A41.500 41.500 0 1 1 41.500 0ZM16 16V41L25 33L34 41L41 34L33 25L41 16ZM66 42L57 50L48 42L41 48L49 57L41 67H66Z"
            />
          </svg>
        </button>
      </section>
      <div className="h-[10px] bg-linear-to-b from-[#c2c1be] to-[#b3b3b0]"></div>

      <ul className="flex-1 border-x border-[#d4d4d4] bg-white">
        {locations.map((location) => (
          <LocationRow key={location.id} {...location} />
        ))}
      </ul>

      {/* Home indicator */}
      <footer className="flex h-[113px] items-end justify-center pb-6">
        <div className="h-[15px] w-[444px] rounded-full bg-white"></div>
      </footer>
    </div>
  )
}
